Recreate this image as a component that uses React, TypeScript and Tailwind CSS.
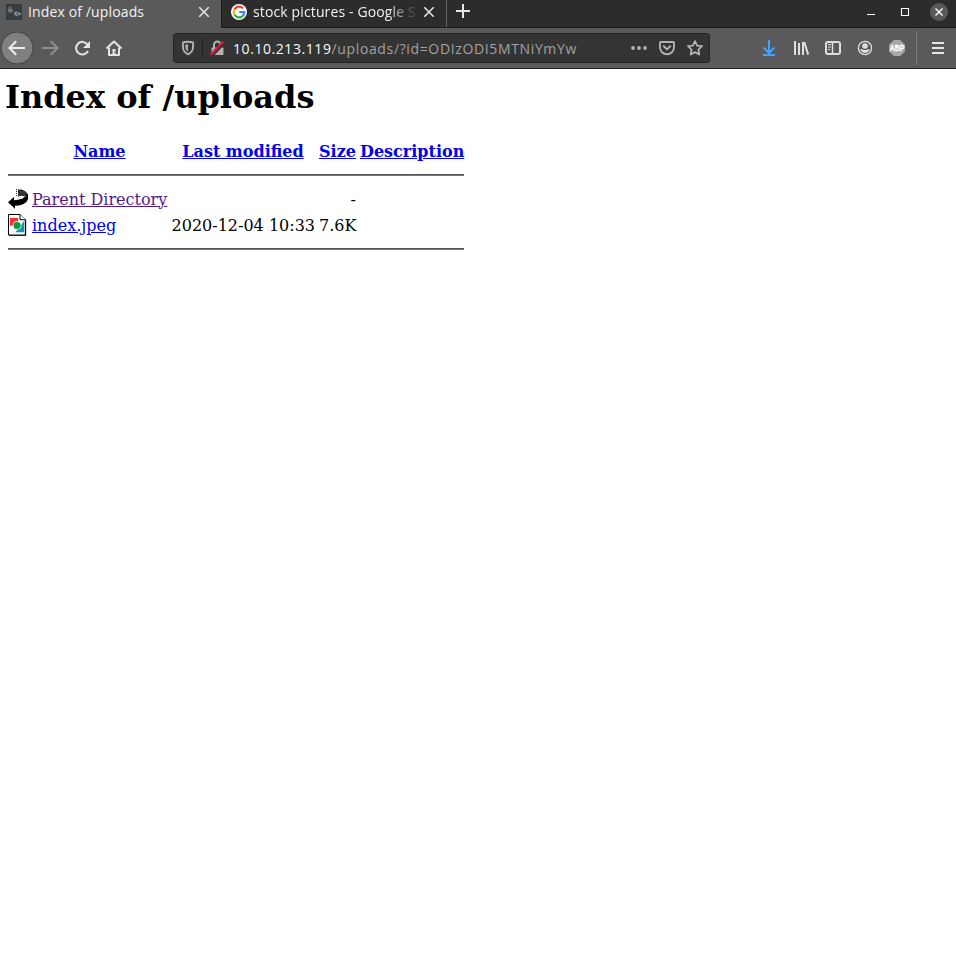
import React from "react";

const ui = "font-['Open_Sans','Noto_Sans',sans-serif]";

function Close({ className = "" }: { className?: string }) {
  return (
    <svg width="12" height="12" viewBox="0 0 12 12" className={className} fill="none" stroke="#e4e4e4" strokeWidth="1.6">
      <path d="M1.3 1.3l9.4 9.4M10.7 1.3l-9.4 9.4" />
    </svg>
  );
}

function Favicon() {
  return (
    <svg width="16" height="16" viewBox="0 0 16 16">
      <rect width="16" height="16" fill="#353d43" />
      <path d="M1.5 5.5l2-1.5 2.5 1 1 2.5-2 1.5-2.5-1z" fill="#777b78" />
      <path d="M2 3.8l1.5-1.5 2 .4.7 1.6-2-.5z" fill="#c04a45" />
      <path d="M3.5 6.5l1.5.5-.5 1z" fill="#30363a" />
      <path d="M8.5 8l2-.8 1.5 1 3 .8-.3 2-2 .2-1.2 1.2-2-1-1.5-1z" fill="#888c8d" />
      <path d="M6 8l2 1M10 9.5h2M11 11h2" stroke="#4a4040" strokeWidth=".9" />
    </svg>
  );
}

function GoogleIcon() {
  return (
    <svg width="16" height="16" viewBox="0 0 16 16">
      <circle cx="8" cy="8" r="8" fill="#fff" />
      <g fill="none" strokeWidth="2.2">
        <path d="M12 4.4A5.3 5.3 0 0 0 3.4 5.4" stroke="#ea4335" />
        <path d="M3.4 5.4a5.3 5.3 0 0 0 0 5.2" stroke="#fbbc05" />
        <path d="M3.4 10.6a5.3 5.3 0 0 0 8.2 1.5" stroke="#34a853" />
        <path d="M11.6 12.1A5.3 5.3 0 0 0 13.2 8H8.2" stroke="#4285f4" />
      </g>
    </svg>
  );
}

function TabBar() {
  return (
    <div className={`flex h-7 bg-[#2c2c2c] text-[14px] leading-6 text-[#f2f2f2] ${ui}`}>
      <div className="flex w-[221px] shrink-0 bg-[#5a5a5a] pl-[6px] pt-1">
        <Favicon />
        <span className="-mt-1 ml-[6px] w-[170px] whitespace-nowrap tracking-[0.13px]">Index of /uploads</span>
        <Close className="mt-[2px]" />
      </div>
      <div className="flex grow border-b border-l border-[#1b1b1b]">
        <div className="flex w-[225px] shrink-0 border-r border-[#626262] pl-[9px] pt-1">
          <GoogleIcon />
          <span className="-mt-1 ml-[6px] w-[163px] overflow-hidden whitespace-nowrap tracking-[0.13px] [mask-image:linear-gradient(to_right,black_134px,transparent_165px)]">stock pictures - Google Search</span>
          <Close className="ml-[7px] mt-[2px] shrink-0" />
        </div>
        <svg width="16" height="16" viewBox="0 0 16 16" className="ml-2 mt-[3px]" stroke="#e8e8e8" strokeWidth="2">
          <path d="M1 8h14M8 1v14" />
        </svg>
        <div className="ml-auto flex pr-2 pt-[2px]">
          <svg width="84" height="20" viewBox="0 0 84 20" fill="none">
            <path d="M3 12.5h8" stroke="#fff" />
            <path d="M37.5 6.5h7v7h-7z" stroke="#fff" strokeWidth="1.1" />
            <circle cx="75" cy="10" r="9" fill="#595959" />
            <path d="M71.5 6.5l7 7M78.5 6.5l-7 7" stroke="#fff" strokeWidth="1.4" />
          </svg>
        </div>
      </div>
    </div>
  );
}

function NavIcons() {
  return (
    <svg width="128" height="40" viewBox="0 28 128 40" fill="none" className="shrink-0">
      <circle cx="17" cy="48" r="16" fill="#808080" stroke="#444" />
      <path d="M9.5 48H25M16.2 41.2L9.5 48l6.7 6.8" stroke="#ededed" strokeWidth="2" />
      <path d="M42 48h15.5M50.8 41.2l6.7 6.8-6.7 6.8" stroke="#8e8e8e" strokeWidth="2" />
      <path d="M87.5 44.5A6.3 6.3 0 1 0 88 51" stroke="#e4e4e4" strokeWidth="2" />
      <path d="M90 41v7h-7z" fill="#e4e4e4" />
      <path d="M106.5 48.5l7.5-7 7.5 7" stroke="#e4e4e4" strokeWidth="2" strokeLinejoin="round" />
      <path d="M109 47.5V55h10v-7.5" stroke="#e4e4e4" strokeWidth="2" strokeLinejoin="round" />
      <path d="M112.5 49h3v6h-3z" fill="#e4e4e4" />
      <path d="M114.2 51.5h1v1.2h-1z" fill="#5a5a5a" />
    </svg>
  );
}

function AddressBar() {
  return (
    <div className="ml-[45px] mt-[5px] flex h-[30px] w-[537px] shrink-0 rounded-[3px] border border-[#242424] bg-[#343434]">
      <svg width="59" height="28" viewBox="174 34 59 28" fill="none" className="shrink-0">
        <path d="M188 41.7c1.8 0 3.7.3 5.1 1v4.1c0 3.2-1.8 5.9-5.1 7.5-3.3-1.6-5.1-4.3-5.1-7.5v-4.1c1.4-.7 3.3-1 5.1-1z" stroke="#b2b2b2" strokeWidth="1.9" />
        <path d="M188 44.2v7.6c-1.7-1.2-2.6-3-2.6-5v-2.1c.8-.3 1.7-.5 2.6-.5z" fill="#b2b2b2" />
        <path d="M202.5 37v22" stroke="#222" />
        <path d="M212.5 47.5h10c.6 0 1 .4 1 1v5.5c0 .6-.4 1-1 1h-10c-.6 0-1-.4-1-1v-5.5c0-.6.4-1 1-1z" fill="#b2b2b2" />
        <path d="M214 48v-3.3a3.3 3.3 0 0 1 6.6 0V48" stroke="#b2b2b2" strokeWidth="2" />
        <path d="M212.2 56l12.6-13.2" stroke="#343434" strokeWidth="2" />
        <path d="M210.5 54.7l13-13.2" stroke="#f60542" strokeWidth="2" />
      </svg>
      <div className={`w-[393px] shrink-0 whitespace-nowrap text-[14px] leading-[29px] text-[#a2a2a2] ${ui}`}>
        <span className="tracking-[0.57px] text-[#fafafa]">10.10.213.119</span><span className="tracking-[0.64px]">/uploads/?id=ODIzODI5MTNiYmYw</span>
      </div>
      <svg width="82" height="28" viewBox="626 34 82 28" fill="none" className="shrink-0">
        <g fill="#b2b2b2"><circle cx="633" cy="48" r="1.9" /><circle cx="639" cy="48" r="1.9" /><circle cx="645" cy="48" r="1.9" /></g>
        <path d="M661 42h12c.6 0 1 .4 1 1v4.3a7 7 0 0 1-14 0V43c0-.6.4-1 1-1z" stroke="#b2b2b2" strokeWidth="1.9" />
        <path d="M663.8 46.3l3.2 3.1 3.2-3.1" stroke="#b2b2b2" strokeWidth="2" strokeLinecap="round" strokeLinejoin="round" />
        <path d="M695 41.1l2.1 4.5 4.9.6-3.6 3.4.9 4.9-4.3-2.4-4.3 2.4.9-4.9-3.6-3.4 4.9-.6z" stroke="#b2b2b2" strokeWidth="1.8" strokeLinejoin="round" />
      </svg>
    </div>
  );
}

function ToolIcons() {
  return (
    <svg width="196" height="40" viewBox="760 28 196 40" fill="none" className="ml-auto shrink-0">
      <path d="M769 40v13M763.5 47.5l5.5 5.5 5.5-5.5M763 55h12" stroke="#45a1ff" strokeWidth="2" />
      <path d="M795 41v14M799 43v12M803 42v13M804.2 42l4 12.6" stroke="#dedede" strokeWidth="2" />
      <rect x="826" y="42" width="14" height="12" rx="2" stroke="#dedede" strokeWidth="2" />
      <path d="M832.5 42v12" stroke="#dedede" strokeWidth="1.5" />
      <path d="M828 44.5h3M828 47h3M828 49.5h2" stroke="#dedede" />
      <circle cx="865" cy="48" r="6.6" stroke="#dedede" strokeWidth="1.3" />
      <circle cx="865" cy="46" r="2.8" fill="#dedede" />
      <path d="M860.3 49.2c1.4-.5 2 .8 4.7.8s3.3-1.3 4.7-.8c-.6 2.3-2.5 3.9-4.7 3.9s-4.1-1.6-4.7-3.9z" fill="#dedede" />
      <path d="M893.8 40h6.4l4.8 4.8v6.4l-4.8 4.8h-6.4l-4.8-4.8v-6.4z" fill="#a8a8a8" />
      <text x="897" y="51" textAnchor="middle" textLength="14.5" lengthAdjust="spacingAndGlyphs" fontFamily="Liberation Sans, sans-serif" fontSize="8.5" fontWeight="700" fill="#fff" stroke="#fff" strokeWidth=".3">ABP</text>
      <path d="M916.5 31v34" stroke="#7b7b7b" />
      <path d="M932 43h12M932 48h12M932 53h12" stroke="#e4e4e4" strokeWidth="2" />
    </svg>
  );
}

function ParentIcon() {
  return (
    <svg width="20" height="22" viewBox="0 0 20 22" className="block">
      <path d="M10 1.5h4l3 1.5 2 2v2l-2 1.5-3-.8-4 .5z" fill="#333" />
      <path d="M8.5 1v8M10.5 1.5v7" stroke="#333" strokeDasharray="1 1" />
      <path d="M19.3 5l.7 2v4l-1.5 3-3.5 2.3-4 1.2-4 .3v3L0 14.2 6 9v3.2l4-.4 4-1.1 4-2.7z" fill="#000" />
    </svg>
  );
}

function ImageIcon() {
  return (
    <svg width="20" height="22" viewBox="0 0 20 22" className="block">
      <path d="M.5.5h11.5l5.5 5.5v15H.5z" fill="#fff" stroke="#000" />
      <path d="M17.5 6v15.5M1 21.2h17" stroke="#000" strokeWidth="1.3" />
      <path d="M16.5 7v13.5M1.5 20.2h15" stroke="#c8c8c8" strokeWidth=".8" />
      <path d="M2 4h8v7.7H2z" fill="#ff3131" />
      <path d="M16 7v11.2H7.5z" fill="#0098d0" />
      <circle cx="9.2" cy="11.5" r="4" fill="#079b3d" stroke="#e6f4ea" strokeWidth=".9" />
      <path d="M12 .5v5.2h5.5" fill="#fff" stroke="#000" />
    </svg>
  );
}

function Rule() {
  return (
    <tr><td colSpan={5} className="h-5 p-px"><hr className="h-[2px] border-0 border-t border-[#555] bg-[#777]" /></td></tr>
  );
}

const link = "text-[#0000ee] underline";

export default function App() {
  return (
    <div className="h-[968px] w-[956px] overflow-hidden bg-white">
      <TabBar />
      <div className="flex h-[41px] border-b border-[#222] bg-[#5a5a5a]">
        <NavIcons />
        <AddressBar />
        <ToolIcons />
      </div>
      <main className="pl-[5px] pt-[9px] font-['DejaVu_Serif',serif] text-base leading-[19px] text-black">
        <h1 className="mb-[21px] text-[32px] font-bold leading-[38px]">Index of /uploads</h1>
        <table className="w-[462px] table-fixed border-separate border-spacing-[2px] [&_td]:whitespace-nowrap">
          <colgroup>
            <col className="w-[22px]" /><col className="w-[137px]" /><col className="w-[146px]" /><col className="w-[39px]" /><col className="w-[106px]" />
          </colgroup>
          <tbody>
            <tr className="h-6">
              <th className="p-px" />
              {["Name", "Last modified", "Size", "Description"].map((name) => (
                <th key={name} className="whitespace-nowrap p-px"><a className={link}>{name}</a></th>
              ))}
            </tr>
            <Rule />
            <tr className="h-6">
              <td className="p-px"><ParentIcon /></td>
              <td className="p-px"><a className="text-[#551a8b] underline">Parent Directory</a></td>
              <td />
              <td className="p-px text-right">-</td>
              <td />
            </tr>
            <tr className="h-6">
              <td className="p-px"><ImageIcon /></td>
              <td className="p-px"><a className={link}>index.jpeg</a></td>
              <td className="p-px text-right">2020-12-04 10:33</td>
              <td className="p-px text-right">7.6K</td>
              <td />
            </tr>
            <Rule />
          </tbody>
        </table>
      </main>
    </div>
  );
}
